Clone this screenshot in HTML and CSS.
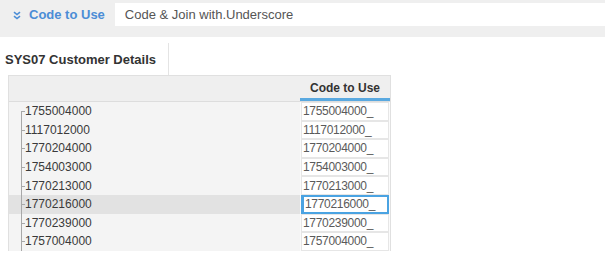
FILE: index.html
```html
<!DOCTYPE html>
<html>
<head>
<meta charset="utf-8">
<link rel="stylesheet" href="styles.css">
</head>
<body>
<div class="toolbar">
  <span class="icon"><svg width="8" height="9" viewBox="0 0 8 9"><path d="M1 1.2 L4 3.6 L7 1.2 M1 5.2 L4 7.6 L7 5.2" fill="none" stroke="#4b8dd6" stroke-width="1.6"/></svg></span>
  <span class="label">Code to Use</span>
  <div class="input">Code &amp; Join with.Underscore</div>
</div>
<div class="tabs">
  <div class="tab">SYS07 Customer Details</div>
</div>
<div class="grid">
  <div class="row head">
    <div class="tree"></div>
    <div class="code"><span class="hlabel">Code to Use</span></div>
  </div>
  <div class="row"><div class="tree"><span class="line first"></span>1755004000</div><div class="code"><span class="cell">1755004000_</span></div></div>
  <div class="row"><div class="tree"><span class="line"></span>1117012000</div><div class="code"><span class="cell">1117012000_</span></div></div>
  <div class="row"><div class="tree"><span class="line"></span>1770204000</div><div class="code"><span class="cell">1770204000_</span></div></div>
  <div class="row"><div class="tree"><span class="line"></span>1754003000</div><div class="code"><span class="cell">1754003000_</span></div></div>
  <div class="row"><div class="tree"><span class="line"></span>1770213000</div><div class="code"><span class="cell">1770213000_</span></div></div>
  <div class="row selected"><div class="tree"><span class="line"></span>1770216000</div><div class="code"><span class="cell focus">1770216000_</span></div></div>
  <div class="row"><div class="tree"><span class="line"></span>1770239000</div><div class="code"><span class="cell">1770239000_</span></div></div>
  <div class="row"><div class="tree"><span class="line"></span>1757004000</div><div class="code"><span class="cell">1757004000_</span></div></div>
</div>
</body>
</html>
```
FILE: styles.css
```css
html, body {
  margin: 0;
  padding: 0;
  background: #ffffff;
  font-family: "Liberation Sans", Arial, sans-serif;
  overflow: hidden;
}

.toolbar {
  width: 605px;
  height: 37px;
  background: #efefef;
  display: flex;
  align-items: flex-start;
  padding-top: 3px;
  box-sizing: border-box;
}

.icon {
  margin-left: 13px;
  margin-top: 8px;
  width: 8px;
  height: 9px;
  display: flex;
}

.label {
  margin-left: 8px;
  font-size: 13px;
  font-weight: bold;
  color: #4b8dd6;
  line-height: 23px;
}

.input {
  flex: 1;
  margin-left: 10px;
  height: 23px;
  line-height: 23px;
  background: #ffffff;
  font-size: 13px;
  color: #555555;
  padding-left: 10px;
}

.tabs {
  height: 38px;
  display: flex;
}

.tab {
  width: 169px;
  margin-top: 6px;
  height: 32px;
  border-right: 1px solid #e4e4e4;
  font-size: 13px;
  font-weight: bold;
  color: #333333;
  padding-left: 5px;
  padding-top: 9px;
  box-sizing: border-box;
  line-height: 16px;
}

.grid {
  margin-left: 8px;
  width: 383px;
  border: 1px solid #e0e0e0;
  border-bottom: none;
  box-sizing: border-box;
  background: #f4f4f4;
}

.row {
  display: flex;
  height: 18.6px;
}

.row.head {
  height: 25px;
  background: #efefef;
  border-bottom: 1px solid #dddddd;
}

.tree {
  width: 291px;
  display: flex;
  align-items: center;
  font-size: 12px;
  color: #3a3a3a;
  position: relative;
  padding-left: 16px;
  box-sizing: border-box;
}

.line {
  position: absolute;
  left: 12px;
  top: 0;
  bottom: 0;
  width: 4px;
  border-left: 1px solid #a8a8a8;
}

.line::after {
  content: "";
  position: absolute;
  left: 0;
  top: 50%;
  width: 3px;
  border-top: 1px solid #a8a8a8;
}

.line.first {
  top: 50%;
}

.line.first::after {
  top: 0;
}

.code {
  width: 90px;
  display: flex;
  align-items: stretch;
  background: #fbfbfb;
}

.head .code {
  background: #efefef;
  justify-content: center;
  align-items: center;
  border-bottom: 3px solid #5aa9e0;
  box-sizing: border-box;
  padding-top: 1px;
}

.hlabel {
  font-size: 12px;
  font-weight: bold;
  color: #333333;
}

.cell {
  flex: 1;
  background: #ffffff;
  border: 1px solid #e6e6e6;
  font-size: 12px;
  color: #5a5a5a;
  display: flex;
  align-items: center;
  padding-left: 1px;
  letter-spacing: -0.3px;
  margin: 0 1px;
}

.row.selected {
  background: #e2e2e2;
}

.row.selected .code {
  background: #fbfbfb;
}

.cell.focus {
  border: 2px solid #4aa3e2;
  border-left-width: 3px;
}
```
